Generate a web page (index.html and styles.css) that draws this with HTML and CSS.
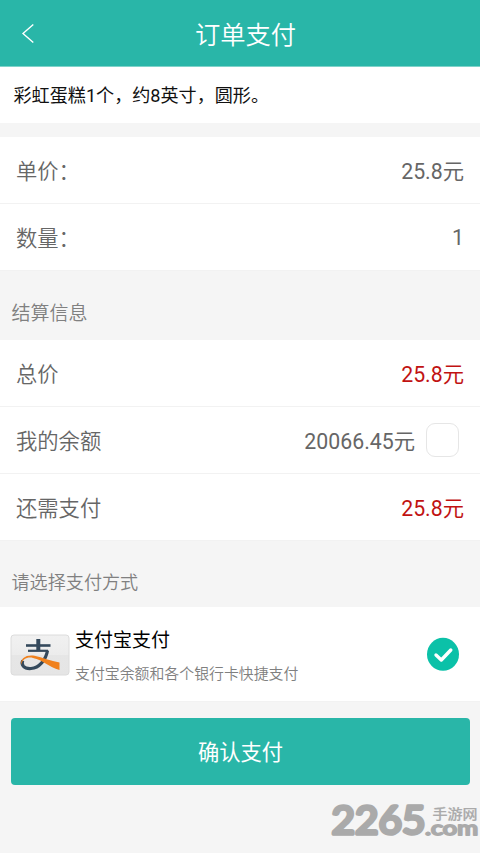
FILE: index.html
```html
<!DOCTYPE html>
<html lang="zh-CN">
<head>
<meta charset="utf-8">
<title>订单支付</title>
<link rel="stylesheet" href="styles.css">
</head>
<body>
<header class="bar">
  <svg class="back" width="14" height="22" viewBox="0 0 14 22"><path d="M12.3 2.500 2 11.500l10.300 9"/></svg>
  <h1>订单支付</h1>
</header>
<main>
  <p class="product">彩虹蛋糕1个，约8英寸，圆形。</p>
  <section class="rows">
    <div class="row"><span class="label">单价：</span><span>25.8元</span></div>
    <div class="row"><span class="label">数量：</span><span class="count">1</span></div>
  </section>
  <h2 class="settle">结算信息</h2>
  <section class="rows">
    <div class="row"><span class="label">总价</span><span class="due">25.8元</span></div>
    <div class="row"><span class="label">我的余额</span><span class="balance">20066.45元<i class="box"></i></span></div>
    <div class="row"><span class="label">还需支付</span><span class="due">25.8元</span></div>
  </section>
  <h2 class="choose">请选择支付方式</h2>
  <section class="method">
    <svg class="logo" width="60" height="42" viewBox="0 0 60 42">
      <defs><linearGradient id="card" x2="0" y2="1"><stop stop-color="#f1f1f1"/><stop offset=".5" stop-color="#ececec"/><stop offset=".5" stop-color="#e6e6e6"/><stop offset="1" stop-color="#e5e5e5"/></linearGradient></defs>
      <rect x="1" y="1" width="58" height="40" rx="3" fill="url(#card)" stroke="#dcdcdc"/>
      <g fill="none" stroke="#34495c">
        <path d="M16 11.500h24.500" stroke-width="2.600"/>
        <path d="M28.300 5v12" stroke-width="4"/>
        <path d="M18 16.800h20" stroke-width="2.200"/>
        <path d="M37.500 16.500c-1.500 9.500-8.500 17.300-16.500 18-7.500.5-10.200-4-8.200-8" stroke-width="3.200"/>
      </g>
      <path d="M11.300 31c-1.300-7 5.200-10.400 13.200-9.200 8 1.500 16 5.300 25 6.800v7.300C39 33 33 26 23 23.900c-5.500-1.100-10.700.700-11.700 7.100z" fill="#f0811d"/>
    </svg>
    <div class="info"><strong>支付宝支付</strong><small>支付宝余额和各个银行卡快捷支付</small></div>
    <svg class="check" width="32" height="34" viewBox="0 0 32 34"><ellipse cx="16" cy="17.300" rx="16" ry="16.500"/><path d="m9 18 5.300 5 9.500-10"/></svg>
  </section>
  <button class="confirm">确认支付</button>
</main>
<svg class="mark" width="160" height="63" viewBox="0 0 160 63">
  <text class="num" x="11.500" y="44" textLength="94" lengthAdjust="spacingAndGlyphs">2265</text>
  <text class="cn" x="112.500" y="28.500" textLength="45" lengthAdjust="spacingAndGlyphs">手游网</text>
  <text class="com" x="105" y="44.500" textLength="53" lengthAdjust="spacingAndGlyphs">.com</text>
</svg>
</body>
</html>
```
FILE: styles.css
```css
* { box-sizing: border-box; }
body {
  position: relative;
  width: 480px;
  height: 853px;
  margin: 0;
  overflow: hidden;
  background: #f5f5f5;
  color: #666;
  font-family: Roboto, "Noto Sans CJK SC", sans-serif;
}
h1, h2, p { margin: 0; font-weight: 400; }
.bar {
  display: flex;
  align-items: center;
  height: 67px;
  padding-left: 21px;
  background: #29b6a8;
  border-bottom: 1px solid #7fd3ca;
  color: #fff;
}
.back { fill: none; stroke: #fff; stroke-width: 1.4; }
.bar h1 {
  flex: 1;
  padding: 0 24px 1px 0;
  text-align: center;
  font-size: 25.300px;
  font-weight: 350;
}
.product {
  height: 56px;
  padding-left: 13.500px;
  line-height: 58px;
  background: #fff;
  color: #111;
  font-size: 18.100px;
  margin-bottom: 14px;
}
.rows { background: #fff; }
.row {
  display: flex;
  justify-content: space-between;
  align-items: center;
  height: 67px;
  padding: 0 16px 2px;
  border-bottom: 1px solid #f2f2f2;
  font-size: 21.300px;
}
.label { font-weight: 350; }
.count { padding-top: 2px; }
.due { color: #c11212; }
.balance { display: flex; align-items: center; }
.box {
  width: 33px;
  height: 34px;
  margin: 2px 5px 0 11px;
  border: 1px solid #e6e6e6;
  border-radius: 9px;
}
h2 {
  padding-left: 11.500px;
  color: #808080;
  font-size: 19px;
  font-weight: 350;
}
.settle { height: 69px; line-height: 86px; }
.choose { height: 66px; line-height: 84px; font-size: 18.100px; }
.method {
  display: flex;
  align-items: center;
  height: 95px;
  padding: 0 21px 0 10px;
  background: #fff;
  border-bottom: 1px solid #f2f2f2;
}
.logo { margin-top: 1px; }
.info { flex: 1; padding: 2px 0 0 5px; }
.info strong, .info small { display: block; font-weight: 400; }
.info strong { color: #000; font-size: 19px; line-height: 30px; }
.info small { color: #808080; font-size: 14.900px; font-weight: 350; line-height: 22px; margin-top: 7px; }
.check { fill: #0bc1a8; }
.check path { fill: none; stroke: #fff; stroke-width: 3.400; stroke-linecap: round; stroke-linejoin: round; }
.confirm {
  display: block;
  width: 459px;
  height: 67px;
  margin: 16px 0 0 11px;
  padding: 0 0 2px;
  border: 0;
  border-radius: 4px;
  background: #29b6a8;
  color: #fff;
  font: 400 21.300px Roboto, "Noto Sans CJK SC", sans-serif;
}
.mark { position: absolute; left: 320px; top: 790px; fill: #aaa; stroke: #aaa; stroke-linejoin: round; }
.mark text { font-family: Lato, "Noto Sans CJK SC", sans-serif; }
.num { font-size: 39px; font-weight: 400; stroke-width: 3.600; }
.cn { font-size: 14px; font-weight: 500; stroke-width: .2; }
.com { font-size: 19px; font-weight: 400; stroke-width: 1.900; }
```
